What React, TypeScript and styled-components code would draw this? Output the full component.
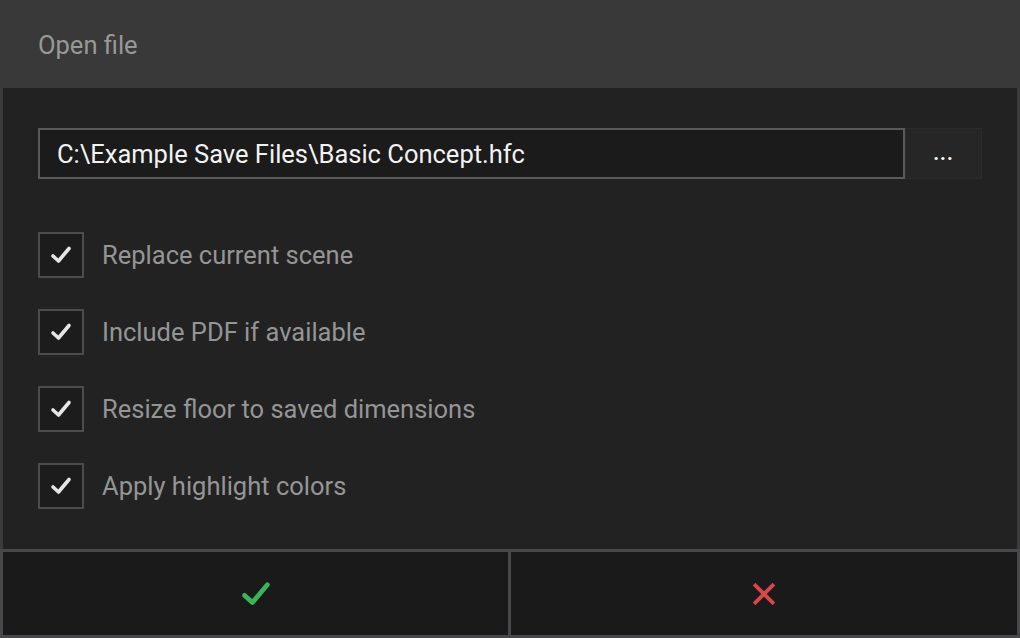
import styled, { createGlobalStyle } from "styled-components";

const GlobalStyle = createGlobalStyle`
  html, body {
    margin: 0;
    padding: 0;
    background: #3a3a3a;
  }
  * {
    box-sizing: border-box;
  }
`;

const options = [
  "Replace current scene",
  "Include PDF if available",
  "Resize floor to saved dimensions",
  "Apply highlight colors",
];

const Dialog = styled.div`
  width: 1020px;
  height: 638px;
  display: flex;
  flex-direction: column;
  background: #3b3b3b;
  font-family: Roboto, "Liberation Sans", sans-serif;
`;

const Header = styled.div`
  height: 88px;
  flex: none;
  display: flex;
  align-items: center;
  padding-left: 38px;
  padding-top: 2px;
  background: #393939;
  color: #989898;
  font-size: 25.5px;
`;

const Body = styled.div`
  flex: 1;
  margin: 0 3px 0 3px;
  background: #222222;
  padding: 40px 35px 0 35px;
  display: flex;
  flex-direction: column;
`;

const PathRow = styled.div`
  display: flex;
  height: 51px;
`;

const PathInput = styled.div`
  flex: 1;
  display: flex;
  align-items: center;
  padding-left: 17px;
  background: #1b1b1b;
  border: 2px solid #5a595b;
  color: #f2f2f2;
  font-size: 25.5px;
`;

const BrowseButton = styled.div`
  width: 77px;
  display: flex;
  align-items: center;
  justify-content: center;
  background: #262626;
  border: 1px solid #2b2b2b;
  color: #ffffff;
  font-size: 20px;
  font-weight: bold;
  letter-spacing: 1px;
  padding-bottom: 2px;
`;

const OptionList = styled.div`
  display: flex;
  flex-direction: column;
  gap: 31px;
  margin-top: 53px;
`;

const OptionRow = styled.div`
  display: flex;
  align-items: center;
  gap: 18px;
`;

const CheckBox = styled.div`
  width: 46px;
  height: 46px;
  display: flex;
  align-items: center;
  justify-content: center;
  background: #1c1c1c;
  border: 2px solid #4c4b4d;
`;

const OptionLabel = styled.span`
  color: #959595;
  font-size: 25.5px;
`;

const Footer = styled.div`
  height: 89px;
  flex: none;
  display: grid;
  grid-template-columns: 505px 1fr;
  gap: 3px;
  padding: 3px;
  background: #484749;
`;

const FooterButton = styled.div`
  display: flex;
  align-items: center;
  justify-content: center;
  background: #1a1a1a;
`;

const Tick = ({ color, size, width }: { color: string; size: number; width: number }) => (
  <svg width={size} height={size} viewBox="0 0 24 24">
    <polyline
      points="4,13 9.5,18 20,5.5"
      fill="none"
      stroke={color}
      strokeWidth={width}
      strokeLinecap="round"
      strokeLinejoin="round"
    />
  </svg>
);

const Cross = () => (
  <svg width="28" height="28" viewBox="0 0 24 24">
    <path d="M3.5 3.5 L20.5 20.5 M20.5 3.5 L3.5 20.5" stroke="#d9474b" strokeWidth="3.2" />
  </svg>
);

export default function App() {
  return (
    <>
      <GlobalStyle />
      <Dialog>
        <Header>Open file</Header>
        <Body>
          <PathRow>
            <PathInput>C:\Example Save Files\Basic Concept.hfc</PathInput>
            <BrowseButton>...</BrowseButton>
          </PathRow>
          <OptionList>
            {options.map((label) => (
              <OptionRow key={label}>
                <CheckBox>
                  <Tick color="#e6e6e6" size={24} width={3.6} />
                </CheckBox>
                <OptionLabel>{label}</OptionLabel>
              </OptionRow>
            ))}
          </OptionList>
        </Body>
        <Footer>
          <FooterButton>
            <Tick color="#3bb35a" size={34} width={3.4} />
          </FooterButton>
          <FooterButton>
            <Cross />
          </FooterButton>
        </Footer>
      </Dialog>
    </>
  );
}
